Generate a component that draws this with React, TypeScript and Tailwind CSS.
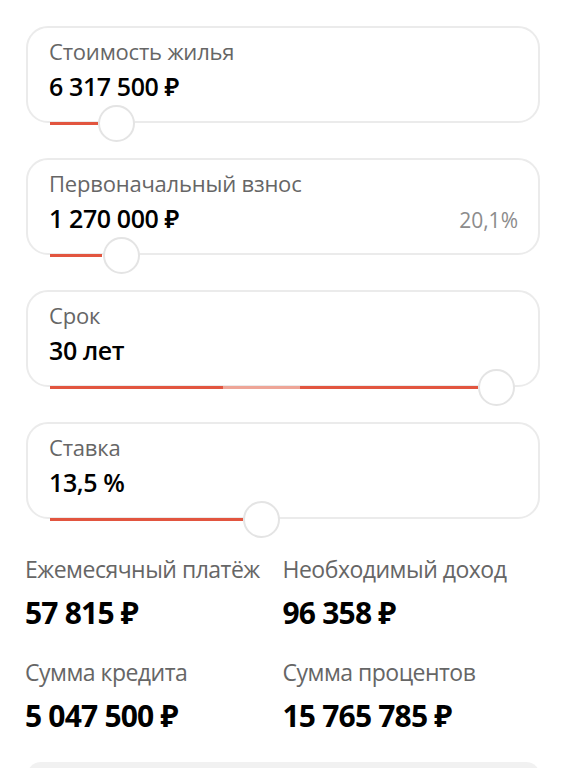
import React from "react";

type Slider = {
  label: string;
  value: string;
  extra?: string;
  fill: number; // px from card left (outer) where red ends
  thumb: number; // px center from card left (outer)
  light?: [number, number];
};

const sliders: Slider[] = [
  { label: "Стоимость жилья", value: "6 317 500 ₽", fill: 72, thumb: 90 },
  { label: "Первоначальный взнос", value: "1 270 000 ₽", extra: "20,1%", fill: 76, thumb: 95 },
  { label: "Срок", value: "30 лет", fill: 452, thumb: 470, light: [197, 274] },
  { label: "Ставка", value: "13,5 %", fill: 217, thumb: 235 },
];

const results = [
  { label: "Ежемесячный платёж", value: "57 815 ₽" },
  { label: "Необходимый доход", value: "96 358 ₽" },
  { label: "Сумма кредита", value: "5 047 500 ₽" },
  { label: "Сумма процентов", value: "15 765 785 ₽" },
];

function Card({ s }: { s: Slider }) {
  return (
    <div className="relative h-[97px] rounded-[22px] border-2 border-[#ebebeb] bg-white pl-[21px] pr-[20px] pt-[10px]">
      <div className="text-[22px] leading-[27px] tracking-[-0.2px] text-[#666666]">{s.label}</div>
      <div className="mt-[6px] flex items-baseline justify-between">
        <div className="text-[25px] font-semibold leading-[31px] tracking-[-0.4px] text-black">{s.value}</div>
        {s.extra && <div className="text-[21px] leading-[31px] text-[#8c8c8c]">{s.extra}</div>}
      </div>
      <div
        className="absolute bottom-[-4px] h-[3px] bg-[#e2553f]"
        style={{ left: 22, width: s.fill - 24 }}
      />
      {s.light && (
        <div
          className="absolute bottom-[-4px] h-[3px] bg-[#eea597]"
          style={{ left: s.light[0] - 2, width: s.light[1] - s.light[0] }}
        />
      )}
      <div
        className="absolute bottom-[-21px] h-[37px] w-[37px] rounded-full border-2 border-[#e4e4e4] bg-white"
        style={{ left: s.thumb - 20 }}
      />
    </div>
  );
}

export default function App() {
  return (
    <div
      className="min-h-[768px] overflow-hidden bg-white"
      style={{ fontFamily: "'Open Sans', 'Noto Sans', sans-serif" }}
    >
      <div className="flex flex-col gap-[35px] pl-[26px] pr-[27px] pt-[26px]">
        {sliders.map((s) => (
          <Card key={s.label} s={s} />
        ))}
      </div>
      <div className="mt-[36px] grid grid-cols-2 gap-y-[27px] pl-[25px] pr-[27px]">
        {results.map((r) => (
          <div key={r.label}>
            <div className="whitespace-nowrap text-[23px] leading-[28px] tracking-[-0.5px] text-[#666666]">{r.label}</div>
            <div className="mt-[12px] text-[30px] font-bold leading-[36px] tracking-[-0.8px] text-black">{r.value}</div>
          </div>
        ))}
      </div>
      <div className="mx-[27px] mt-[28px] h-[40px] rounded-t-[14px] bg-[#f1f1f1]" />
    </div>
  );
}
